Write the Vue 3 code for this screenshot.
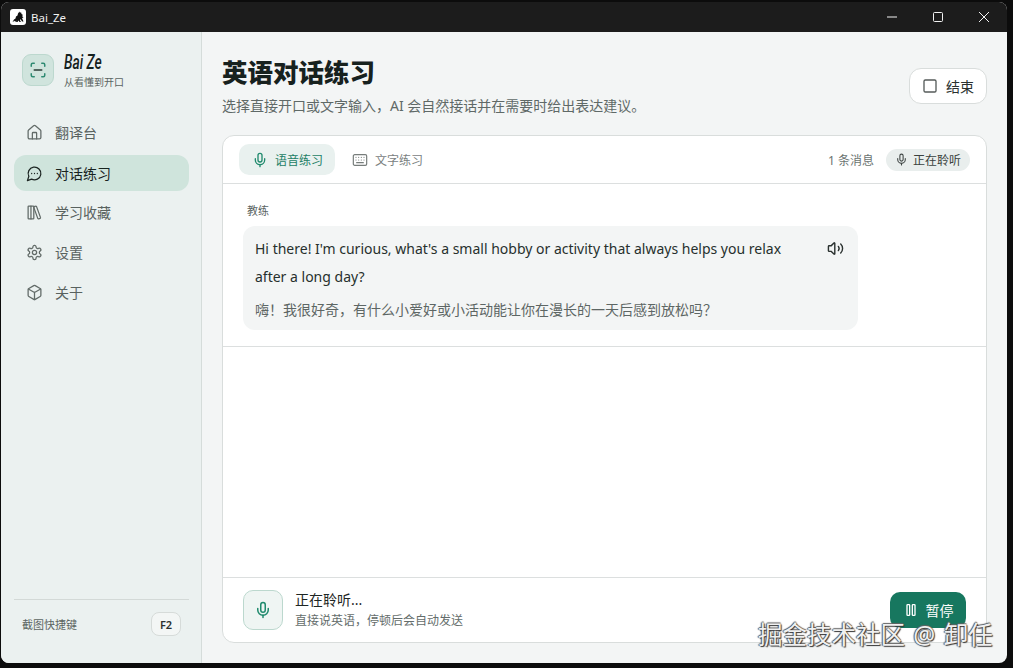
<script setup>
const nav = [
  { label: '翻译台', icon: 'house' },
  { label: '对话练习', icon: 'chat', active: true },
  { label: '学习收藏', icon: 'library' },
  { label: '设置', icon: 'gear' },
  { label: '关于', icon: 'box' },
]
</script>

<template>
  <div class="desktop">
    <div class="window">
      <header class="titlebar">
        <div class="app-id">
          <span class="app-icon">
            <svg viewBox="0 0 16 16" width="16" height="16">
              <path d="M2.500 13l1.500-2.500 1.500-1 .5-2 1.500-1 .5-2 1.500-2 .5 1.500 1-1 .5 2 1.500 1-1 1 1.500 1.500-1.500.5 1.500 3.500h-1.500l-1.500-2.500-.5 1.500 1 1.500H9.500l-1-1.500-1 1.500H6l.5-1.500L5 13l-.2-1.200z" fill="#111" />
            </svg>
          </span>
          <span class="app-name">Bai_Ze</span>
        </div>
        <div class="win-controls">
          <svg viewBox="0 0 12 12" width="12" height="12"><path d="M1 6h10" stroke="#f2f2f2" fill="none" /></svg>
          <svg viewBox="0 0 12 12" width="12" height="12"><rect x="1.500" y="1.500" width="9" height="9" rx="1" stroke="#f2f2f2" fill="none" /></svg>
          <svg viewBox="0 0 12 12" width="12" height="12"><path d="M1 1l10 10M11 1L1 11" stroke="#f2f2f2" fill="none" /></svg>
        </div>
      </header>

      <div class="body">
        <aside class="sidebar">
          <div class="brand">
            <span class="logo">
              <svg class="ic" viewBox="0 0 24 24" width="18" height="18" stroke="#2f8a72" stroke-width="2">
                <path d="M3 7V5a2 2 0 0 1 2-2h2" /><path d="M17 3h2a2 2 0 0 1 2 2v2" />
                <path d="M21 17v2a2 2 0 0 1-2 2h-2" /><path d="M7 21H5a2 2 0 0 1-2-2v-2" />
                <path d="M7 12h10" stroke="#2a3a36" />
              </svg>
            </span>
            <div class="brand-text">
              <div class="brand-name">Bai Ze</div>
              <div class="brand-sub">从看懂到开口</div>
            </div>
          </div>

          <nav class="nav">
            <div v-for="item in nav" :key="item.label" class="nav-item" :class="{ active: item.active }">
              <svg class="ic nav-ic" viewBox="0 0 24 24" width="17" height="17" stroke-width="1.800">
                <template v-if="item.icon === 'house'">
                  <path d="M15 21v-8a1 1 0 0 0-1-1h-4a1 1 0 0 0-1 1v8" />
                  <path d="M3 10a2 2 0 0 1 .709-1.528l7-5.999a2 2 0 0 1 2.582 0l7 5.999A2 2 0 0 1 21 10v9a2 2 0 0 1-2 2H5a2 2 0 0 1-2-2z" />
                </template>
                <template v-else-if="item.icon === 'chat'">
                  <path d="M7.900 20A9 9 0 1 0 4 16.100L2 22Z" />
                  <path d="M8 12h.01M12 12h.01M16 12h.01" />
                </template>
                <template v-else-if="item.icon === 'library'">
                  <rect x="3" y="3" width="8" height="18" rx="1" />
                  <path d="M7 3v18" />
                  <path d="M20.400 18.900c.2.5-.1 1.100-.6 1.300l-1.900.7c-.5.2-1.100-.1-1.300-.6L11.100 5.100c-.2-.5.1-1.100.6-1.300l1.900-.7c.5-.2 1.100.1 1.300.6Z" />
                </template>
                <template v-else-if="item.icon === 'gear'">
                  <path d="M12.220 2h-.44a2 2 0 0 0-2 2v.18a2 2 0 0 1-1 1.730l-.43.25a2 2 0 0 1-2 0l-.15-.08a2 2 0 0 0-2.730.73l-.22.38a2 2 0 0 0 .73 2.730l.15.1a2 2 0 0 1 1 1.720v.51a2 2 0 0 1-1 1.740l-.15.09a2 2 0 0 0-.73 2.730l.22.38a2 2 0 0 0 2.730.73l.15-.08a2 2 0 0 1 2 0l.43.25a2 2 0 0 1 1 1.730V20a2 2 0 0 0 2 2h.44a2 2 0 0 0 2-2v-.18a2 2 0 0 1 1-1.730l.43-.25a2 2 0 0 1 2 0l.15.08a2 2 0 0 0 2.730-.73l.22-.39a2 2 0 0 0-.73-2.730l-.15-.08a2 2 0 0 1-1-1.740v-.5a2 2 0 0 1 1-1.740l.15-.09a2 2 0 0 0 .73-2.730l-.22-.38a2 2 0 0 0-2.730-.73l-.15.08a2 2 0 0 1-2 0l-.43-.25a2 2 0 0 1-1-1.730V4a2 2 0 0 0-2-2z" />
                  <circle cx="12" cy="12" r="3" />
                </template>
                <template v-else>
                  <path d="M21 8a2 2 0 0 0-1-1.730l-7-4a2 2 0 0 0-2 0l-7 4A2 2 0 0 0 3 8v8a2 2 0 0 0 1 1.730l7 4a2 2 0 0 0 2 0l7-4A2 2 0 0 0 21 16Z" />
                  <path d="m3.300 7 8.700 5 8.700-5M12 22V12" />
                </template>
              </svg>
              <span>{{ item.label }}</span>
            </div>
          </nav>

          <div class="shortcut">
            <span>截图快捷键</span>
            <kbd class="key">F2</kbd>
          </div>
        </aside>

        <main class="main">
          <div class="page-head">
            <div class="heading">
              <h1>英语对话练习</h1>
              <p>选择直接开口或文字输入，AI 会自然接话并在需要时给出表达建议。</p>
            </div>
            <button class="end-btn">
              <svg class="ic" viewBox="0 0 24 24" width="16" height="16" stroke="#555b59" stroke-width="2"><rect x="3" y="3" width="18" height="18" rx="2" /></svg>
              结束
            </button>
          </div>

          <section class="card">
            <div class="tabs">
              <div class="tab on">
                <svg class="ic" viewBox="0 0 24 24" width="16" height="16" stroke="#1f8a6d" stroke-width="2">
                  <path d="M12 2a3 3 0 0 0-3 3v7a3 3 0 0 0 6 0V5a3 3 0 0 0-3-3Z" /><path d="M19 10v2a7 7 0 0 1-14 0v-2" /><path d="M12 19v3" />
                </svg>
                语音练习
              </div>
              <div class="tab">
                <svg class="ic" viewBox="0 0 24 24" width="16" height="16" stroke="#777d7b" stroke-width="1.800">
                  <rect x="2" y="4" width="20" height="16" rx="2" /><path d="M6 8h.01M10 8h.01M14 8h.01M18 8h.01M6 12h.01M10 12h.01M14 12h.01M18 12h.01M7 16h10" />
                </svg>
                文字练习
              </div>
              <div class="tabs-right">
                <span class="count">1 条消息</span>
                <span class="status">
                  <svg class="ic" viewBox="0 0 24 24" width="13" height="13" stroke="#3f4644" stroke-width="2">
                    <path d="M12 2a3 3 0 0 0-3 3v7a3 3 0 0 0 6 0V5a3 3 0 0 0-3-3Z" /><path d="M19 10v2a7 7 0 0 1-14 0v-2" /><path d="M12 19v3" />
                  </svg>
                  正在聆听
                </span>
              </div>
            </div>

            <div class="messages">
              <div class="turn">
                <div class="who">教练</div>
                <div class="bubble">
                  <div class="bubble-top">
                    <div class="en">Hi there! I'm curious, what's a small hobby or activity that always helps you relax after a long day?</div>
                    <svg class="ic speak" viewBox="0 0 24 24" width="17" height="17" stroke="#2b3230" stroke-width="2">
                      <path d="M11 4.702a.705.705 0 0 0-1.203-.498L6.413 7.587A1.400 1.400 0 0 1 5.416 8H3a1 1 0 0 0-1 1v6a1 1 0 0 0 1 1h2.416a1.400 1.400 0 0 1 .997.413l3.383 3.384A.705.705 0 0 0 11 19.298z" />
                      <path d="M16 9a5 5 0 0 1 0 6" /><path d="M19.364 18.364a9 9 0 0 0 0-12.728" />
                    </svg>
                  </div>
                  <div class="zh">嗨！我很好奇，有什么小爱好或小活动能让你在漫长的一天后感到放松吗？</div>
                </div>
              </div>
            </div>

            <div class="voice-bar">
              <span class="mic-box">
                <svg class="ic" viewBox="0 0 24 24" width="18" height="18" stroke="#1f8a6d" stroke-width="2">
                  <path d="M12 2a3 3 0 0 0-3 3v7a3 3 0 0 0 6 0V5a3 3 0 0 0-3-3Z" /><path d="M19 10v2a7 7 0 0 1-14 0v-2" /><path d="M12 19v3" />
                </svg>
              </span>
              <div class="voice-text">
                <div class="voice-title">正在聆听...</div>
                <div class="voice-sub">直接说英语，停顿后会自动发送</div>
              </div>
              <button class="pause-btn">
                <svg class="ic" viewBox="0 0 24 24" width="16" height="16" stroke="#fff" stroke-width="2">
                  <rect x="14" y="4" width="4" height="16" rx="1" /><rect x="6" y="4" width="4" height="16" rx="1" />
                </svg>
                暂停
              </button>
            </div>
          </section>
        </main>
      </div>
    </div>
    <div class="watermark">掘金技术社区 @ 卸任</div>
  </div>
</template>

<style>
html, body { margin: 0; background: #0c0c0c; }
</style>

<style scoped>
* { box-sizing: border-box; }
.desktop {
  position: relative;
  width: 1013px;
  height: 668px;
  overflow: hidden;
  padding: 2px 6px 5px 1px;
  background: #0c0c0c;
  font-family: "Noto Sans", "Noto Sans CJK SC", sans-serif;
  color: #1d2624;
}
.window {
  height: 100%;
  display: flex;
  flex-direction: column;
  border-radius: 8px;
  overflow: hidden;
  background: #f3f5f5;
}
.titlebar {
  height: 30px;
  flex: none;
  background: #1c1c1c;
  display: flex;
  align-items: center;
  justify-content: space-between;
}
.app-id { display: flex; align-items: center; padding-left: 9px; gap: 5px; }
.app-icon {
  width: 16px; height: 16px; border-radius: 3px; background: #fff;
  display: flex;
}
.app-name { color: #f2f2f2; font-size: 11.500px; }
.win-controls { display: flex; gap: 34px; padding-right: 17px; }
.ic { fill: none; stroke-linecap: round; stroke-linejoin: round; flex: none; }
.body { flex: 1; min-height: 0; display: flex; }
.sidebar {
  width: 201px;
  flex: none;
  background: #ebf1f0;
  border-right: 1px solid #d5dcda;
  padding: 22px 12px 27px 13px;
  display: flex;
  flex-direction: column;
}
.brand { display: flex; align-items: center; gap: 10px; padding-left: 8px; height: 32px; }
.logo {
  width: 32px; height: 32px; border-radius: 9px;
  background: #d0e4dd; border: 1px solid #bcd8ce;
  display: flex; align-items: center; justify-content: center;
}
.brand-name {
  font-family: Roboto, sans-serif;
  font-style: italic;
  font-weight: 500;
  font-size: 21px;
  line-height: 20px;
  color: #14201d;
  transform: scaleX(0.66);
  transform-origin: left center;
}
.brand-sub { font-size: 10px; line-height: 14px; color: #5b6562; margin-top: 3px; }
.nav { margin-top: 28px; display: flex; flex-direction: column; gap: 4px; }
.nav-item {
  height: 36px;
  border-radius: 12px;
  display: flex;
  align-items: center;
  gap: 12px;
  padding-left: 12px;
  font-size: 14px;
  color: #59625f;
}
.nav-ic { stroke: #626b68; }
.nav-item.active { background: #cfe4dc; color: #18231f; margin-top: 1px; margin-bottom: -1px; }
.nav-item.active .nav-ic { stroke: #1c2522; }
.shortcut {
  margin-top: auto;
  border-top: 1px solid #d3d9d7;
  padding: 12px 8px 0;
  display: flex;
  align-items: center;
  justify-content: space-between;
  font-size: 11px;
  color: #5b6562;
}
.key {
  width: 30px; height: 24px; border-radius: 8px;
  background: #f3f6f5; border: 1px solid #d6dbd9;
  display: flex; align-items: center; justify-content: center;
  font-family: "Noto Sans", sans-serif;
  font-size: 11px; font-weight: 600; color: #2a312f;
}
.main { flex: 1; min-width: 0; display: flex; flex-direction: column; padding: 20px; }
.page-head { display: flex; justify-content: space-between; align-items: flex-start; height: 65px; margin-bottom: 18px; }
.heading { padding-top: 2px; }
h1 { margin: 0; font-size: 25.500px; line-height: 36px; font-weight: 900; color: #17211e; }
.heading p { margin: 6px 0 0; font-size: 14px; line-height: 20px; color: #5f6967; }
.end-btn {
  margin-top: 16px;
  width: 78px; height: 36px;
  border-radius: 12px;
  border: 1px solid #d9dddc;
  background: #fff;
  display: flex; align-items: center; justify-content: center; gap: 8px;
  font-family: inherit; font-size: 14px; color: #2a312f;
  padding: 0;
}
.card {
  flex: 1; min-height: 0;
  background: #fff;
  border: 1px solid #d9dddc;
  border-radius: 12px;
  display: flex; flex-direction: column;
  overflow: hidden;
}
.tabs {
  height: 48px; flex: none;
  border-bottom: 1px solid #dcdfdf;
  display: flex; align-items: center;
  padding: 0 16px;
  gap: 9px;
}
.tab {
  height: 31px; width: 96px;
  border-radius: 10px;
  display: flex; align-items: center; gap: 7px;
  padding-left: 13px;
  font-size: 12px;
  color: #7a817f;
}
.tab.on { background: #e9f1ef; color: #1d7f66; }
.tab:not(.on) { padding-left: 8px; }
.tabs-right { margin-left: auto; display: flex; align-items: center; gap: 12px; }
.count { font-size: 12px; color: #6a7371; }
.status {
  width: 84px; height: 22px; border-radius: 11px;
  background: #e9eeed;
  display: flex; align-items: center; justify-content: center; gap: 5px;
  font-size: 12px; color: #3a4240;
}
.messages { flex: 1; min-height: 0; }
.turn { padding: 20px 20px 16px; border-bottom: 1px solid #dcdfdf; }
.who { font-size: 11px; line-height: 14px; color: #5b6462; margin: 0 0 8px 4px; }
.bubble {
  width: 615px;
  background: #f3f5f5;
  border-radius: 12px;
  padding: 9px 12px;
}
.bubble-top { display: flex; justify-content: space-between; align-items: flex-start; }
.en { width: 535px; font-size: 14px; line-height: 28px; color: #27302d; }
.speak { margin: 5px 2px 0 0; }
.zh { margin-top: 8px; font-size: 14px; line-height: 22px; color: #5d6664; }
.voice-bar {
  height: 65px; flex: none;
  border-top: 1px solid #dcdfdf;
  display: flex; align-items: center;
  padding: 0 20px;
  gap: 12px;
}
.mic-box {
  width: 40px; height: 40px; border-radius: 10px;
  background: #eff5f3; border: 1px solid #bcd8ce;
  display: flex; align-items: center; justify-content: center;
}
.voice-text { flex: 1; }
.voice-title { font-size: 14px; line-height: 18px; color: #1d2624; }
.voice-sub { font-size: 12px; line-height: 18px; color: #646d6b; margin-top: 3px; }
.pause-btn {
  width: 76px; height: 36px;
  border: 0; border-radius: 10px;
  background: #17775f;
  color: #fff;
  display: flex; align-items: center; justify-content: center; gap: 7px;
  font-family: inherit; font-size: 14px;
  padding: 0;
}
.watermark {
  position: absolute;
  left: 758px;
  top: 618px;
  white-space: nowrap;
  font-size: 24.500px;
  word-spacing: 2px;
  line-height: 34px;
  color: #f0f0f0;
  text-shadow: 1px 1px 1px #333, -1px 0 1px #555, 0 -1px 1px #666;
}
</style>
